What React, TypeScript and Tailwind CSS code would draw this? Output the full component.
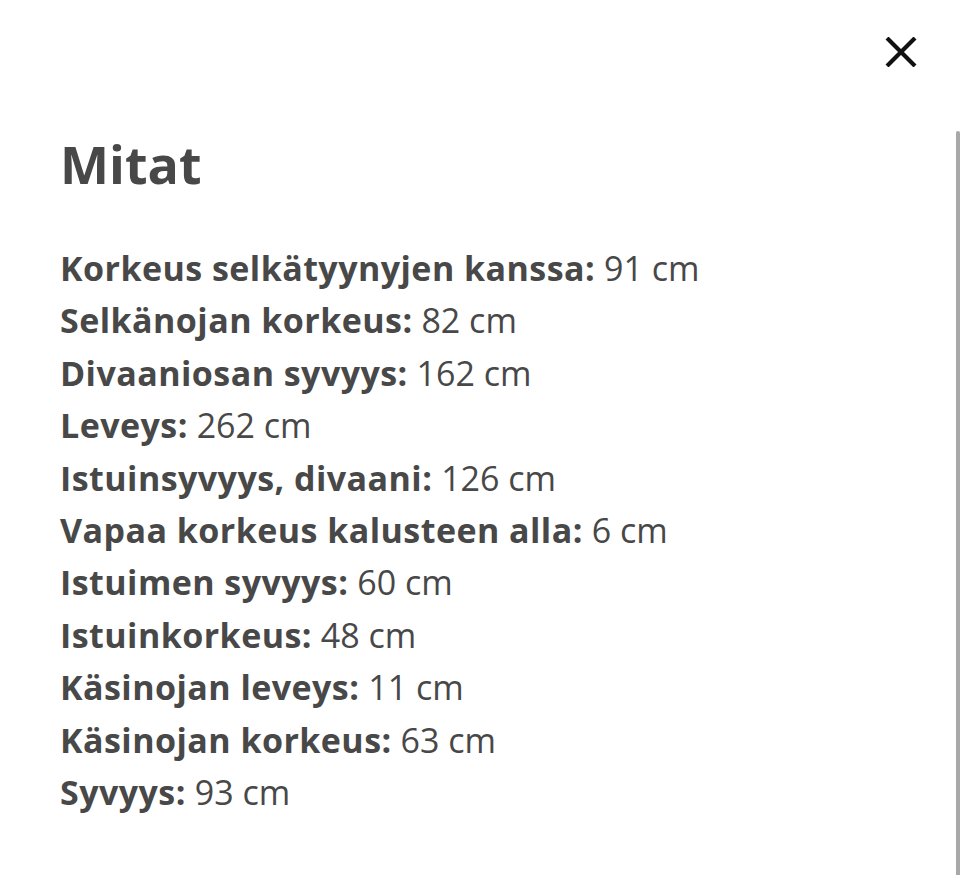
import React from 'react';

const rows: [string, string][] = [
  ['Korkeus selkätyynyjen kanssa:', '91 cm'],
  ['Selkänojan korkeus:', '82 cm'],
  ['Divaaniosan syvyys:', '162 cm'],
  ['Leveys:', '262 cm'],
  ['Istuinsyvyys, divaani:', '126 cm'],
  ['Vapaa korkeus kalusteen alla:', '6 cm'],
  ['Istuimen syvyys:', '60 cm'],
  ['Istuinkorkeus:', '48 cm'],
  ['Käsinojan leveys:', '11 cm'],
  ['Käsinojan korkeus:', '63 cm'],
  ['Syvyys:', '93 cm'],
];

export default function App() {
  return (
    <div className="relative w-[960px] h-[875px] bg-white overflow-hidden font-['Open_Sans',sans-serif] text-[#484848]">
      <div className="flex justify-end pt-[36px] pr-[43px]">
        <button className="w-[32px] h-[32px] flex items-center justify-center">
          <svg width="32" height="30" viewBox="0 0 32 30">
            <path d="M2 1 L30 29 M30 1 L2 29" stroke="#111" strokeWidth="4.2" />
          </svg>
        </button>
      </div>
      <div className="px-[60px] pt-[66px]">
        <h2 className="text-[52px] leading-[60px] font-bold">Mitat</h2>
        <div className="mt-[48px]">
          {rows.map(([k, v]) => (
            <p key={k} className="text-[34px] leading-[52.4px]">
              <span className="font-bold tracking-[0.45px]">{k}</span> {v}
            </p>
          ))}
        </div>
      </div>
      <div className="absolute right-0 top-[131px] bottom-0 w-[4px] rounded-t-[2px] bg-[#a8a8a8]" />
    </div>
  );
}
